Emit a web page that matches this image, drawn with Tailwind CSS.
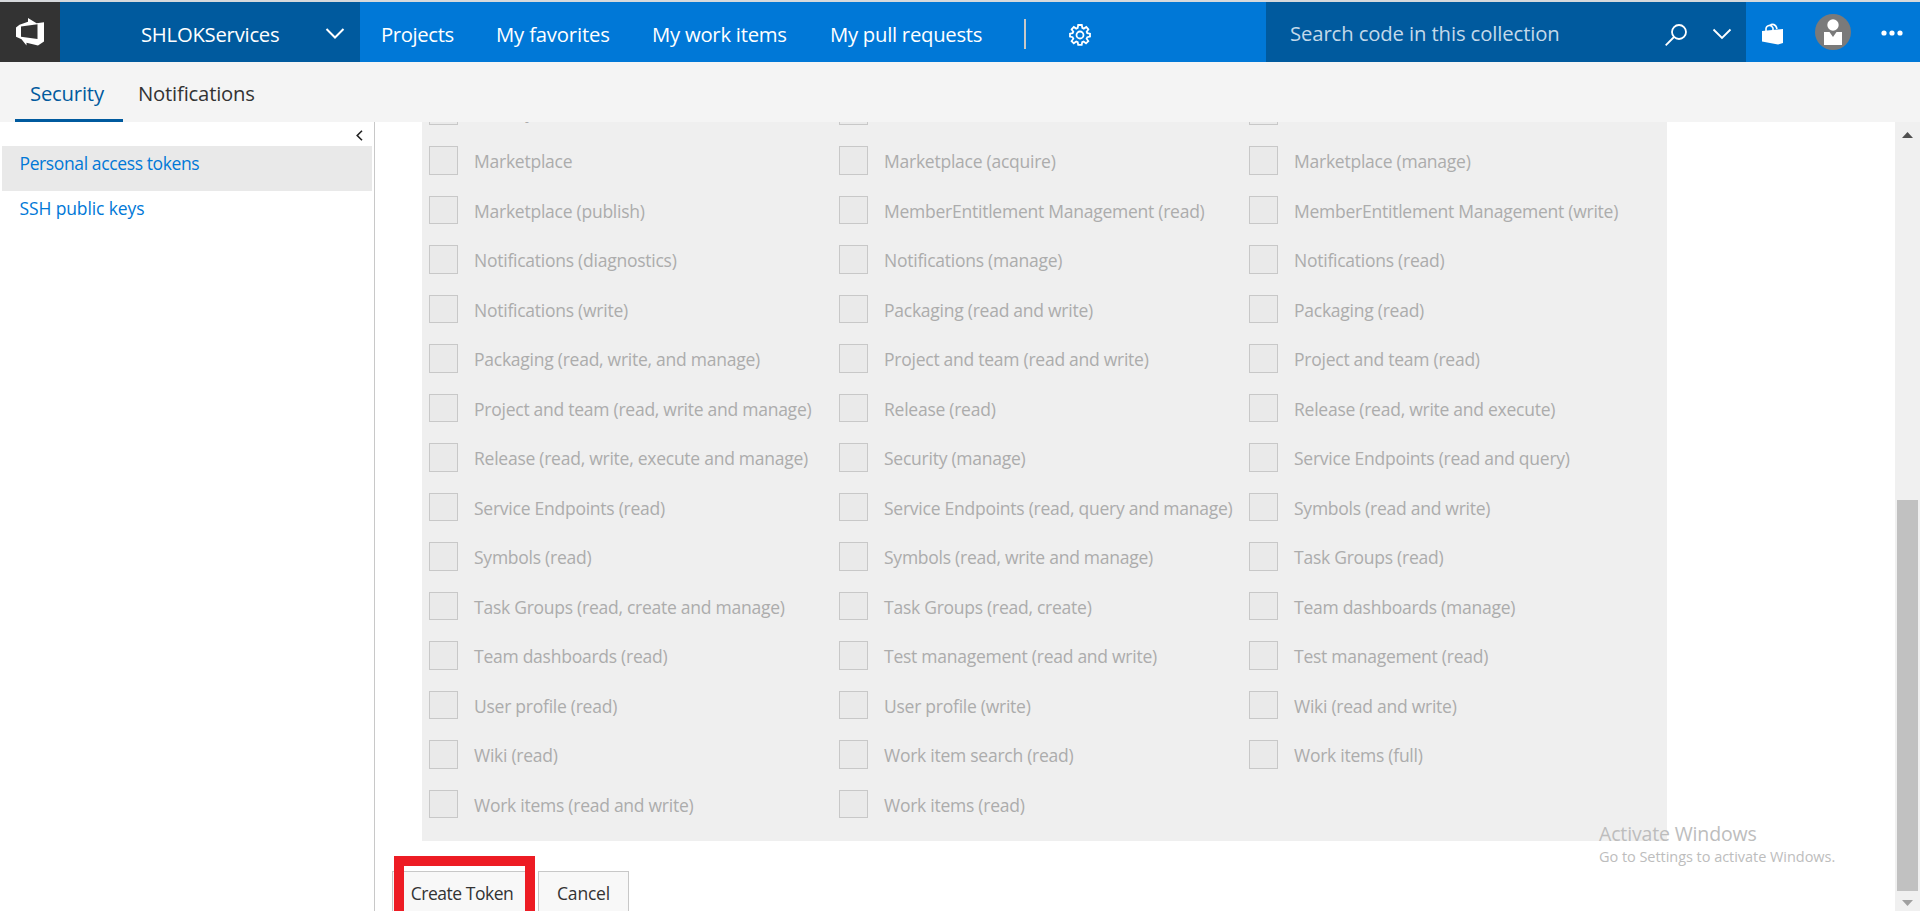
<!DOCTYPE html>
<html lang="en">
<head>
<meta charset="utf-8">
<title>Security - Personal access tokens</title>
<script src="https://cdn.jsdelivr.net/npm/@tailwindcss/browser@4"></script>
</head>
<body class="relative flex h-[911px] w-[1920px] flex-col overflow-hidden border-t-2 border-[#d6d9dc] bg-white font-['Open_Sans',sans-serif] whitespace-nowrap">
  <header class="flex h-[60px] shrink-0 bg-[#0078d7] text-[20.3px] text-white">
    <a class="flex w-[60px] items-center justify-center bg-[#333]">
      <svg class="size-7" viewBox="0 0 28 28" fill="#fff"><path fill-rule="evenodd" d="M12 0 20.500 5.200 28 4.200V23.500L22 27.500 10.500 24.800V27.500L5.500 21.200 0 18.700V9.500L3.500 6.700 12 3.800ZM5 8.600V18.800L21.500 21V6.200Z"/></svg>
    </a>
    <div class="flex w-[300px] items-center bg-[#005a9e] pl-[81px]">
      <span class="w-[184px] pt-[4px] tracking-[-0.25px]">SHLOKServices</span>
      <svg class="mt-[3px] h-3 w-5" viewBox="0 0 20 12" fill="none" stroke="#fff" stroke-width="2"><path d="M1.500 1 10 9.500 18.500 1"/></svg>
    </div>
    <nav class="flex w-[906px] items-center pl-[21px]">
      <a class="w-[115px] pt-[4px] tracking-[-0.38px]">Projects</a>
      <a class="w-[156px] pt-[4px] tracking-[-0.18px]">My favorites</a>
      <a class="w-[178px] pt-[4px] tracking-[-0.25px]">My work items</a>
      <a class="w-[194px] pt-[4px] tracking-[-0.27px]">My pull requests</a>
      <span class="mt-[3px] h-[30px] w-[2px] bg-[#c8c8c8]"></span>
      <svg class="mt-[5px] ml-[43px] size-[22px]" viewBox="0 0 22 22" fill="none" stroke="#fff" stroke-width="1.800"><circle cx="11" cy="11" r="3.500"/><path d="M9.200 1h3.600l.5 2.900 1.500.7 2.500-1.700 2.100 2.400-1.700 2.500.6 1.400 2.700.5v2.900l-2.700.6-.7 1.500 1.700 2.400-2.300 2.200-2.400-1.700-1.400.6-.5 2.700H9.200l-.5-2.700-1.500-.6-2.400 1.700-2.200-2.200 1.700-2.400-.7-1.500-2.600-.6V9.700l2.600-.5.7-1.400-1.700-2.500 2.200-2.400 2.400 1.700 1.500-.7z"/></svg>
    </nav>
    <div class="flex w-[480px] items-center bg-[#005a9e] pl-6">
      <span class="w-[375px] pt-[2px] tracking-[-0.12px] text-[#c3d9ea]">Search code in this collection</span>
      <svg class="mt-[5px] size-[22px]" viewBox="0 0 22 22" fill="none" stroke="#fff" stroke-width="1.800"><circle cx="14" cy="8" r="7"/><path d="M9 13 .7 21.300"/></svg>
      <svg class="mt-1 ml-[25px] h-3 w-5" viewBox="0 0 20 12" fill="none" stroke="#fff" stroke-width="1.800"><path d="M1.500 1.500 10 10 18.500 1.500"/></svg>
    </div>
    <div class="flex items-center pl-4">
      <svg class="mt-[3px] h-[22px] w-[21px]" viewBox="0 0 21 22"><path d="M0 8 21 6V20L16 21.500 0 18.500Z" fill="#fff"/><path d="M4 8V5.500C4.500 2 9 1 11 5V7M8 2.500C10 .5 14 1 15 6" fill="none" stroke="#fff" stroke-width="1.600"/></svg>
      <svg class="ml-8 size-9" viewBox="0 0 36 36"><circle cx="18" cy="18" r="18" fill="#7a7a7a"/><circle cx="18" cy="11" r="5.700" fill="#fff"/><path d="M9 18h5.500L18 23l3.500-5H27V31H9Z" fill="#fff"/></svg>
      <svg class="ml-[30px] mt-px h-[6px] w-[22px]" viewBox="0 0 22 6" fill="#fff"><circle cx="3" cy="3" r="2.600"/><circle cx="11" cy="3" r="2.600"/><circle cx="19" cy="3" r="2.600"/></svg>
    </div>
  </header>

  <div class="flex h-[60px] shrink-0 bg-[#f4f4f4] pl-[15px] text-[20.3px] tracking-[-0.2px] text-[#333]">
    <a class="w-[108px] border-b-3 border-[#005a9e] pl-[15px] leading-[62px] text-[#005a9e]">Security</a>
    <a class="pl-[15px] leading-[62px]">Notifications</a>
  </div>

  <div class="flex min-h-0 flex-1">
    <aside class="w-[375px] shrink-0 border-r border-[#c8c8c8] pr-[2px] pl-[2px] text-[17.5px] text-[#0078d7]">
      <div class="flex h-6 items-center justify-end pr-[9px] pt-[3px]">
        <svg class="h-[11px] w-[7px]" viewBox="0 0 7 11" fill="none" stroke="#222" stroke-width="1.600"><path d="M6 .7 1.200 5.500 6 10.300"/></svg>
      </div>
      <a class="block h-[45px] bg-[#e9e9e9] pl-[17.500px] leading-[35px] tracking-[-0.38px]">Personal access tokens</a>
      <a class="block h-[45px] pl-[17.500px] leading-[35px] tracking-[-0.12px]">SSH public keys</a>
    </aside>

    <main class="min-w-0 flex-1 overflow-hidden pl-[17px]">
      <div class="ml-[30px] flex h-[719px] w-[1245px] flex-col justify-end overflow-hidden bg-[#efefef] pb-[1.500px] pl-[7px]">
        <div id="scopes" class="grid grid-cols-[410px_410px_410px] auto-rows-[49.540px] text-[17.5px] tracking-[-0.24px] [word-spacing:-0.1px] text-[#acacac]"></div>
      </div>
      <div class="flex gap-1 pt-[30px] text-[17.5px] text-[#333]">
        <button class="h-[46px] w-[142px] border border-[#c8c8c8] bg-[#f8f8f8] pr-[2px] pb-[1px] tracking-[-0.48px]">Create Token</button>
        <button class="h-[46px] w-[91px] border border-[#c8c8c8] bg-[#f8f8f8] pb-[1px] tracking-[-0.2px]">Cancel</button>
      </div>
    </main>

    <div class="flex w-[25px] shrink-0 flex-col items-center bg-[#f0f0f0]">
      <svg class="mt-[10px] h-[6px] w-[11px] shrink-0" viewBox="0 0 11 6" fill="#505050"><path d="M5.500 0 11 6H0Z"/></svg>
      <div class="mt-[362px] h-[391px] w-[21px] shrink-0 bg-[#c1c1c1]"></div>
      <svg class="mt-[9px] h-[6px] w-[11px] shrink-0" viewBox="0 0 11 6" fill="#a0a0a0"><path d="M0 0H11L5.500 6Z"/></svg>
    </div>
  </div>

  <!-- highlight around the primary action -->
  <div class="absolute top-[854px] left-[394px] h-[80px] w-[141px] border-[10px] border-[#ed1c24]"></div>
  <!-- system watermark -->
  <div class="absolute top-[818px] left-[1599px] text-[#bdbdbd]">
    <p class="text-[19.5px] leading-[28px] tracking-[-0.15px]">Activate Windows</p>
    <p class="text-[14.5px] leading-[18px] tracking-[-0.04px]">Go to Settings to activate Windows.</p>
  </div>

<script>
const scopes = [
  "Identity (read)", "Load test (read)", "Load test (read and write)",
  "Marketplace", "Marketplace (acquire)", "Marketplace (manage)",
  "Marketplace (publish)", "MemberEntitlement Management (read)", "MemberEntitlement Management (write)",
  "Notifications (diagnostics)", "Notifications (manage)", "Notifications (read)",
  "Notifications (write)", "Packaging (read and write)", "Packaging (read)",
  "Packaging (read, write, and manage)", "Project and team (read and write)", "Project and team (read)",
  "Project and team (read, write and manage)", "Release (read)", "Release (read, write and execute)",
  "Release (read, write, execute and manage)", "Security (manage)", "Service Endpoints (read and query)",
  "Service Endpoints (read)", "Service Endpoints (read, query and manage)", "Symbols (read and write)",
  "Symbols (read)", "Symbols (read, write and manage)", "Task Groups (read)",
  "Task Groups (read, create and manage)", "Task Groups (read, create)", "Team dashboards (manage)",
  "Team dashboards (read)", "Test management (read and write)", "Test management (read)",
  "User profile (read)", "User profile (write)", "Wiki (read and write)",
  "Wiki (read)", "Work item search (read)", "Work items (full)",
  "Work items (read and write)", "Work items (read)"
];
document.getElementById("scopes").innerHTML = scopes.map(s => `
  <label class="flex items-start">
    <span class="mr-[16.500px] size-[28.500px] shrink-0 border border-[#c8c8c8] bg-[#eaeaea]"></span>
    <span class="leading-[31px]">${s}</span>
  </label>`).join("");
</script>
</body>
</html>
